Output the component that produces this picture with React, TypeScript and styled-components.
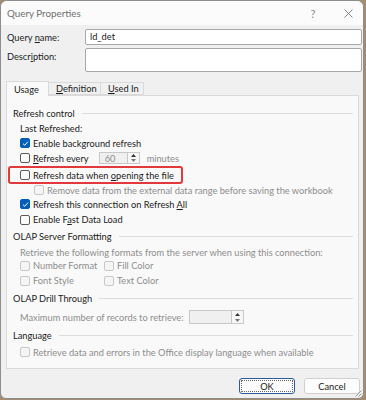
import styled, { createGlobalStyle } from 'styled-components';

const Global = createGlobalStyle`
  html, body { margin: 0; padding: 0; }
  body {
    background: #a48c6e;
    font-family: Lato, "Noto Sans", sans-serif;
    font-size: 9.25px;
    color: #1b1b1b;
    width: 366px;
    height: 400px;
    overflow: hidden;
  }
`;

const Window = styled.div`
  width: 364px;
  height: 399px;
  background: #f0f0f0;
  border: 1px solid #8d8d8d;
  border-radius: 7px 7px 6px 6px;
  box-sizing: border-box;
  overflow: hidden;
  display: flex;
  flex-direction: column;
  position: relative;
`;

const TitleBar = styled.div`
  height: 24px;
  flex: none;
  background: #fbfbfb;
  display: flex;
  align-items: center;
  gap: 6px;
  padding-left: 6px;
  font-size: 9.8px;
  color: #6f6f6f;
`;

const Title = styled.span`
  flex: 1;
`;

const TitleButton = styled.span<{ $w: number }>`
  width: ${(p) => p.$w}px;
  color: #8a8a8a;
  font-size: 11px;
  display: flex;
  justify-content: center;
`;

const Body = styled.div`
  flex: 1;
  padding: 4px 1px 0 5px;
  display: flex;
  flex-direction: column;
`;

const FieldRow = styled.div`
  display: grid;
  grid-template-columns: 79px 1fr;
  align-items: start;
  margin-bottom: 3px;
`;

const FieldLabel = styled.label`
  padding-top: 3px;
  padding-left: 1px;
`;

const TextBox = styled.div<{ $h: number }>`
  height: ${(p) => p.$h}px;
  background: #fff;
  border: 1px solid #a8a8a8;
  border-radius: 2px;
  box-sizing: border-box;
  padding: 2px 4px;
  line-height: 10px;
`;

const Tabs = styled.div`
  display: flex;
  margin-top: 6px;
  height: 14px;
  align-items: flex-end;
`;

const Tab = styled.div<{ $active?: boolean; $w: number }>`
  box-sizing: border-box;
  width: ${(p) => p.$w}px;
  height: ${(p) => (p.$active ? 15 : 13)}px;
  margin-bottom: ${(p) => (p.$active ? -1 : 0)}px;
  padding-left: 7px;
  display: flex;
  align-items: center;
  background: ${(p) => (p.$active ? '#f9f9f9' : '#f0f0f0')};
  border: 1px solid #dadada;
  border-bottom: ${(p) => (p.$active ? 'none' : '1px solid #dadada')};
  border-left: ${(p) => (p.$active ? '1px solid #dadada' : 'none')};
  position: relative;
  z-index: ${(p) => (p.$active ? 2 : 1)};
`;

const Panel = styled.div`
  width: 353px;
  height: 274px;
  flex: none;
  background: #f9f9f9;
  border: 1px solid #dadada;
  box-sizing: border-box;
  padding: 9px 5px 0 6px;
  display: flex;
  flex-direction: column;
`;

const Legend = styled.div<{ $h: number }>`
  display: flex;
  align-items: center;
  gap: 7px;
  height: ${(p) => p.$h}px;
  flex: none;
  &::after {
    content: '';
    flex: 1;
    height: 1px;
    background: #dcdcdc;
  }
`;

const Indent = styled.div<{ $px: number }>`
  padding-left: ${(p) => p.$px}px;
  display: flex;
  flex-direction: column;
`;

const Line = styled.div<{ $disabled?: boolean; $h: number }>`
  height: ${(p) => p.$h}px;
  flex: none;
  display: flex;
  align-items: center;
  color: ${(p) => (p.$disabled ? '#8d8d8d' : 'inherit')};
  white-space: nowrap;
`;

const Text = styled.span`
  white-space: pre;
`;

const Box = styled.span<{ $checked?: boolean; $disabled?: boolean }>`
  width: 10px;
  height: 10px;
  border-radius: 2px;
  box-sizing: border-box;
  flex: none;
  margin-right: 3px;
  border: 1px solid
    ${(p) => (p.$checked ? '#005fb8' : p.$disabled ? '#c8c8c8' : '#5c5c5c')};
  background: ${(p) => (p.$checked ? '#005fb8' : p.$disabled ? '#f5f5f5' : '#fbfbfb')};
  display: flex;
  align-items: center;
  justify-content: center;
`;

const Highlight = styled.div`
  margin-left: -12px;
  padding-left: 10px;
  width: 175px;
  box-sizing: border-box;
  border: 2px solid #e4393c;
  border-radius: 3px;
`;

const Spin = styled.div<{ $w: number; $h: number; $ml: number }>`
  width: ${(p) => p.$w}px;
  height: ${(p) => p.$h}px;
  border: 1px solid #c8c8c8;
  background: #f0f0f0;
  box-sizing: border-box;
  display: flex;
  color: #8d8d8d;
  margin-left: ${(p) => p.$ml}px;
  margin-right: 7px;
  flex: none;
`;

const SpinValue = styled.span`
  flex: 1;
  padding-left: 5px;
  display: flex;
  align-items: center;
`;

const SpinArrows = styled.span`
  width: 11px;
  border-left: 1px solid #c8c8c8;
  background: #f7f7f7;
  display: flex;
  flex-direction: column;
  align-items: center;
  justify-content: space-around;
`;

const TwoCol = styled.div`
  display: grid;
  grid-template-columns: 84px 1fr;
`;

const Footer = styled.div`
  display: flex;
  justify-content: flex-end;
  gap: 9px;
  padding: 9px 2px 0 0;
`;

const Button = styled.div<{ $primary?: boolean }>`
  width: 56px;
  height: 16px;
  box-sizing: border-box;
  border: 1px solid ${(p) => (p.$primary ? '#2c5aa0' : '#d0d0d0')};
  outline: ${(p) => (p.$primary ? '1px dotted #666' : 'none')};
  outline-offset: -3px;
  background: #fdfdfd;
  border-radius: 3px;
  display: flex;
  align-items: center;
  justify-content: center;
`;

const Muted = styled.span`
  color: #8d8d8d;
`;

const Grip = styled.svg`
  position: absolute;
  right: 1px;
  bottom: 1px;
`;

const U = styled.span`
  text-decoration: underline;
`;

const Check = ({ checked, disabled }: { checked?: boolean; disabled?: boolean }) => (
  <Box $checked={checked} $disabled={disabled}>
    {checked && (
      <svg width="7" height="7" viewBox="0 0 7 7">
        <path d="M1 3.7 L2.8 5.3 L6 1.6" stroke="#fff" strokeWidth="1" fill="none" />
      </svg>
    )}
  </Box>
);

const Arrows = () => (
  <SpinArrows>
    <svg width="5" height="3" viewBox="0 0 5 3">
      <path d="M0 3 L2.5 0 L5 3 Z" fill="#333" />
    </svg>
    <svg width="5" height="3" viewBox="0 0 5 3">
      <path d="M0 0 L2.5 3 L5 0 Z" fill="#777" />
    </svg>
  </SpinArrows>
);

export default function App() {
  return (
    <>
      <Global />
      <Window>
        <TitleBar>
          <Title>Query Properties</Title>
          <TitleButton $w={30}>?</TitleButton>
          <TitleButton $w={29}>
            <svg width="9" height="9" viewBox="0 0 9 9">
              <path d="M0.5 0.5 L8.5 8.5 M8.5 0.5 L0.5 8.5" stroke="#7a7a7a" strokeWidth="0.9" />
            </svg>
          </TitleButton>
        </TitleBar>
        <Body>
          <FieldRow>
            <FieldLabel>
              Query <U>n</U>ame:
            </FieldLabel>
            <TextBox $h={16}>ld_det</TextBox>
          </FieldRow>
          <FieldRow>
            <FieldLabel>
              Descr<U>i</U>ption:
            </FieldLabel>
            <TextBox $h={24} />
          </FieldRow>
          <Tabs>
            <Tab $active $w={43}>
              <Text>Usa<U>g</U>e</Text>
            </Tab>
            <Tab $w={52}>
              <Text><U>D</U>efinition</Text>
            </Tab>
            <Tab $w={43}>
              <Text><U>U</U>sed In</Text>
            </Tab>
          </Tabs>
          <Panel>
            <Legend $h={16}>Refresh control</Legend>
            <Indent $px={7}>
              <Line $h={15}>Last Refreshed:</Line>
              <Line $h={14}>
                <Check checked />
                <Text>Enable back<U>g</U>round refresh</Text>
              </Line>
              <Line $h={16}>
                <Check />
                <Text><U>R</U>efresh every</Text>
                <Spin $w={41} $h={12} $ml={10}>
                  <SpinValue>60</SpinValue>
                  <Arrows />
                </Spin>
                <Muted>minutes</Muted>
              </Line>
              <Highlight>
                <Line $h={14}>
                  <Check />
                  <Text>Refresh data when <U>o</U>pening the file</Text>
                </Line>
              </Highlight>
              <Indent $px={14}>
                <Line $disabled $h={12}>
                  <Check disabled />
                  <Text>Remove data from the external data range before saving the workbook</Text>
                </Line>
              </Indent>
              <Line $h={16}>
                <Check checked />
                <Text>Refresh this connection on Refresh <U>A</U>ll</Text>
              </Line>
              <Line $h={15}>
                <Check />
                <Text>Enable F<U>a</U>st Data Load</Text>
              </Line>
            </Indent>
            <Legend $h={19}>OLAP Server Formatting</Legend>
            <Indent $px={7}>
              <Line $disabled $h={12}>
                <Text>Retrieve the following formats from the server when using this connection:</Text>
              </Line>
              <TwoCol>
                <Line $disabled $h={15}>
                  <Check disabled />
                  <Text>Number Format</Text>
                </Line>
                <Line $disabled $h={15}>
                  <Check disabled />
                  <Text>Fill Color</Text>
                </Line>
                <Line $disabled $h={15}>
                  <Check disabled />
                  <Text>Font Style</Text>
                </Line>
                <Line $disabled $h={15}>
                  <Check disabled />
                  <Text>Text Color</Text>
                </Line>
              </TwoCol>
            </Indent>
            <Legend $h={20}>OLAP Drill Through</Legend>
            <Indent $px={7}>
              <Line $disabled $h={18}>
                <Text>Maximum number of records to retrieve:</Text>
                <Spin $w={55} $h={14} $ml={5}>
                  <SpinValue />
                  <Arrows />
                </Spin>
              </Line>
            </Indent>
            <Legend $h={19}>Language</Legend>
            <Indent $px={7}>
              <Line $disabled $h={14}>
                <Check disabled />
                <Text>Retrieve data and errors in the Office display language when available</Text>
              </Line>
            </Indent>
          </Panel>
          <Footer>
            <Button $primary>OK</Button>
            <Button>Cancel</Button>
          </Footer>
        </Body>
        <Grip width="7" height="7" viewBox="0 0 7 7">
          <path d="M6.5 0.5 L0.5 6.5 M6.5 3.5 L3.5 6.5" stroke="#9a9a9a" strokeWidth="1" />
        </Grip>
      </Window>
    </>
  );
}
